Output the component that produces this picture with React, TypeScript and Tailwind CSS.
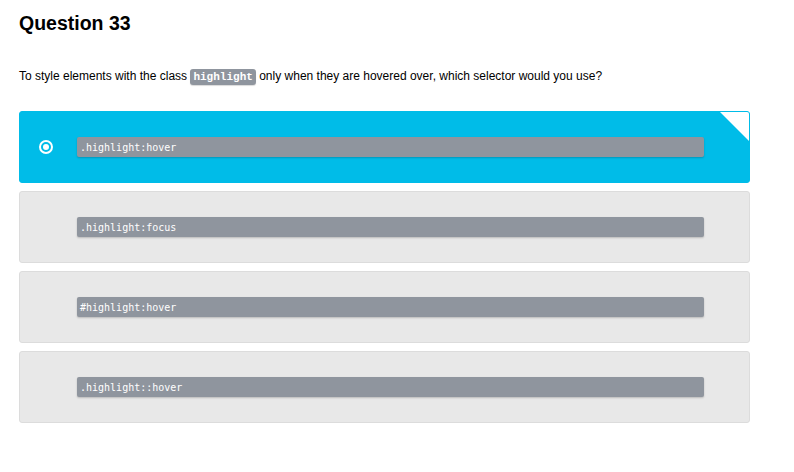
import React from "react";

const options = [
  { code: ".highlight:hover", selected: true },
  { code: ".highlight:focus", selected: false },
  { code: "#highlight:hover", selected: false },
  { code: ".highlight::hover", selected: false },
];

function Radio() {
  return (
    <div className="w-[14px] h-[14px] rounded-full border-2 border-white flex items-center justify-center">
      <div className="w-[6px] h-[6px] rounded-full bg-white" />
    </div>
  );
}

export default function App() {
  return (
    <div className="w-[794px] h-[472px] bg-white px-[19px] pt-[11px] font-['Liberation_Sans',Arial,sans-serif] text-black">
      <h1 className="text-[19.5px] font-bold leading-[24px]">Question 33</h1>

      <p className="mt-[33px] text-[12px] leading-[16px]">
        To style elements with the class{" "}
        <code className="inline-block rounded-[3px] bg-[#8f959e] px-[3px] text-[11px] leading-[16px] font-bold text-white font-['Liberation_Mono','Courier_New',monospace] shadow-[0_1px_1px_rgba(0,0,0,0.15)]">
          highlight
        </code>{" "}
        only when they are hovered over, which selector would you use?
      </p>

      {/* Answers */}
      <div className="mt-[26px] flex w-[731px] flex-col gap-[8px]">
        {options.map((opt) => (
          <div
            key={opt.code}
            className={
              opt.selected
                ? "relative flex h-[72px] items-center overflow-hidden rounded-[3px] border border-[#00bce8] bg-[#00bce8] pl-[19px]"
                : "relative flex h-[72px] items-center overflow-hidden rounded-[3px] border border-[#dcdcdc] bg-[#e8e8e8] pl-[19px]"
            }
          >
            <div className="w-[14px]">{opt.selected && <Radio />}</div>
            <div className="ml-[24px] flex h-[20px] w-[627px] items-center rounded-[2px] bg-[#8f959e] pl-[3px] text-[10px] text-white font-['DejaVu_Sans_Mono',monospace] shadow-[0_1px_2px_rgba(0,0,0,0.2)]">
              {opt.code}
            </div>
            {opt.selected && (
              <svg
                className="absolute right-0 top-0"
                width="29"
                height="29"
                viewBox="0 0 29 29"
              >
                <polygon points="0,0 29,0 29,29" fill="#ffffff" />
              </svg>
            )}
          </div>
        ))}
      </div>
    </div>
  );
}
